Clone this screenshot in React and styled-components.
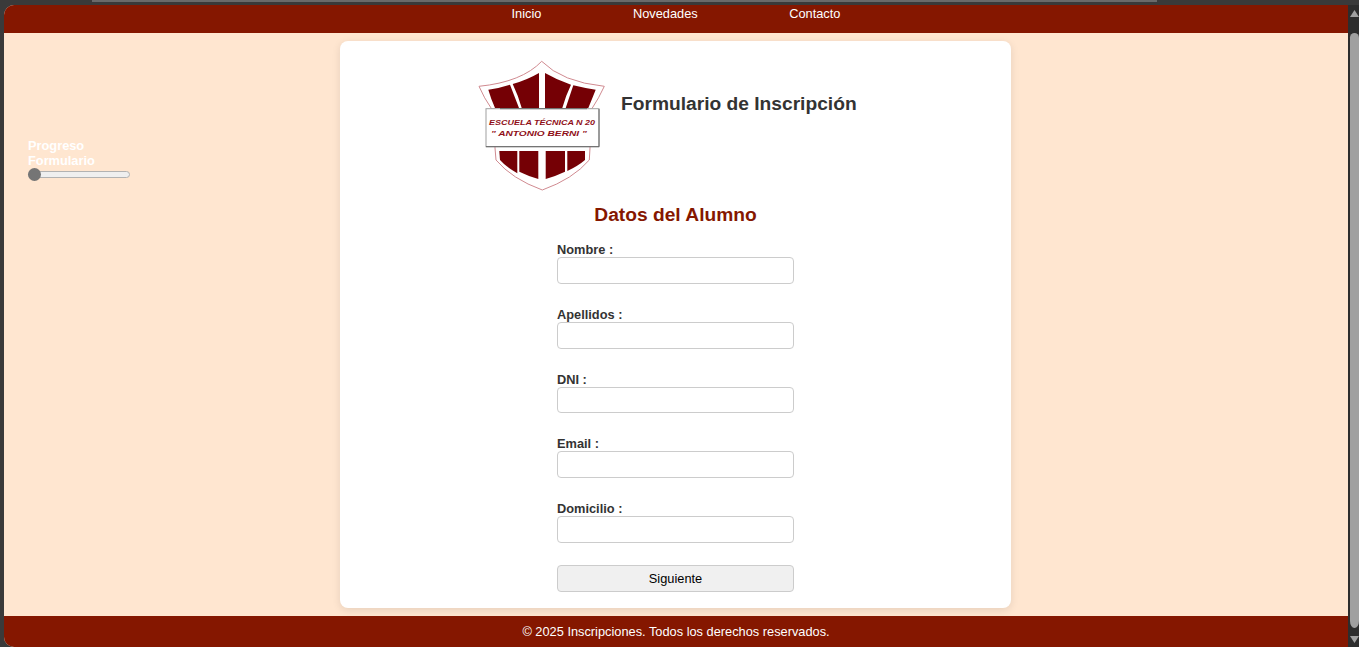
import React from 'react';
import styled, { createGlobalStyle } from 'styled-components';

const GlobalStyle = createGlobalStyle`
  html, body {
    margin: 0;
    height: 100%;
    overflow: hidden;
  }
  body {
    font-family: "Liberation Sans", Arial, sans-serif;
    background: #3a3a3a;
  }
`;

// window frame
const Frame = styled.div`
  display: flex;
  flex-direction: column;
  width: 1359px;
  height: 647px;
  background: #3a3a3a;
`;

const TopStrip = styled.div`
  flex: none;
  height: 2px;
  margin: 0 202px 3px 92px;
  background: #6a6a6a;
`;

const Viewport = styled.div`
  flex: 1;
  display: flex;
  min-height: 0;
  padding-left: 4px;
`;

const Page = styled.div`
  flex: 1;
  display: flex;
  flex-direction: column;
  min-width: 0;
  background: #ffe6d0;
  border-radius: 10px 0 0 10px;
  overflow: hidden;
`;

// scrollbar
const Scrollbar = styled.div`
  flex: none;
  display: flex;
  flex-direction: column;
  align-items: flex-end;
  width: 11px;
  padding-top: 5px;
  background: #2d2d2d;
`;

const Arrow = styled.div`
  flex: none;
  width: 9px;
  height: 7px;
  background: #a0a0a0;
  clip-path: ${(p) => (p.$down ? 'polygon(0 0, 100% 0, 50% 100%)' : 'polygon(50% 0, 100% 100%, 0 100%)')};
`;

const Thumb = styled.div`
  flex: none;
  width: 9px;
  height: 595px;
  margin: 16px 0 8px;
  background: #a0a0a0;
  border-radius: 5px 5px 5px 5px / 5px 5px 8px 8px;
`;

// header
const Header = styled.header`
  flex: none;
  box-sizing: border-box;
  display: flex;
  justify-content: center;
  gap: 91.5px;
  height: 28px;
  padding-top: 1px;
  background: #851700;
`;

const NavLink = styled.a`
  color: #ffffff;
  font-size: 12.8px;
  line-height: 16px;
  text-decoration: none;
`;

// main
const Main = styled.main`
  flex: 1;
  display: grid;
  grid-template-columns: 336px 671px 1fr;
  min-height: 0;
  padding: 8px 0;
`;

const Sidebar = styled.aside`
  display: flex;
  flex-direction: column;
  align-items: flex-start;
  padding: 97px 0 0 24px;
`;

const ProgressLabel = styled.label`
  width: 90px;
  color: #ffffff;
  font-size: 12.8px;
  font-weight: bold;
  line-height: 15px;
`;

const ProgressBar = styled.input`
  appearance: none;
  width: 102px;
  height: 13px;
  margin: 0;
  background: transparent;

  &::-webkit-slider-runnable-track {
    box-sizing: border-box;
    height: 7px;
    background: #efefef;
    border: 1px solid #b2b2b2;
    border-radius: 4px;
  }

  &::-webkit-slider-thumb {
    appearance: none;
    width: 13px;
    height: 13px;
    margin-top: -4px;
    background: #757575;
    border-radius: 50%;
    transform: translateX(-1px);
  }
`;

const Card = styled.section`
  display: flex;
  flex-direction: column;
  align-items: center;
  padding-top: 14px;
  background: #ffffff;
  border-radius: 8px;
  box-shadow: 0 2px 8px rgba(0, 0, 0, 0.1);
`;

const CardHead = styled.div`
  align-self: flex-start;
  display: flex;
  align-items: flex-start;
  gap: 6px;
  height: 142px;
  margin-left: 130px;
`;

const Logo = styled.svg`
  flex: none;
  width: 145px;
  height: 142px;
`;

const Title = styled.h1`
  margin: 37px 0 0;
  color: #333333;
  font-size: 19.2px;
  line-height: 24px;
  font-weight: bold;
`;

const Subtitle = styled.h2`
  margin: 6px 0 14px;
  color: #851700;
  font-size: 19.2px;
  line-height: 24px;
  font-weight: bold;
`;

const Form = styled.form`
  display: flex;
  flex-direction: column;
  width: 237px;
`;

const Field = styled.div`
  display: flex;
  flex-direction: column;
  margin-bottom: 22px;
`;

const FieldLabel = styled.label`
  height: 16px;
  color: #333333;
  font-size: 12.8px;
  font-weight: bold;
  line-height: 18px;
`;

const Input = styled.input`
  box-sizing: border-box;
  width: 100%;
  height: 26.75px;
  padding: 4px 8px;
  background: #ffffff;
  border: 1px solid #cccccc;
  border-radius: 4px;
`;

const Button = styled.button`
  box-sizing: border-box;
  width: 100%;
  height: 27px;
  padding: 0;
  color: #000000;
  font-family: inherit;
  font-size: 12.8px;
  background: #f0f0f0;
  border: 1px solid #cccccc;
  border-radius: 4px;
`;

// footer
const Footer = styled.footer`
  flex: none;
  height: 31px;
  color: #ffffff;
  font-size: 12.8px;
  line-height: 31px;
  text-align: center;
  background: #851700;
`;

const FIELDS = ['Nombre', 'Apellidos', 'DNI', 'Email', 'Domicilio'];

const PANELS = [
  'M18.3 34.7 Q30 33 40 29.7 L49 53 H25 Q21 44 18.3 34.7 Z',
  'M42.7 29 Q57 25 69 18 V53 H51.7 Q48 40 42.7 29 Z',
  'M75 18 Q87 25 101 29.7 Q96 40 92.3 53 H75 Z',
  'M103.3 30.3 Q114 33 125.7 34.7 Q122 44 118.3 53 H95.7 Z',
  'M29.3 96 H47.3 V118.3 Q36 112 30 105 Z',
  'M49.3 96 H68.3 V124 Q58 121 49.3 116.7 Z',
  'M75.7 96 H95 V116.7 Q86 121 75.7 124 Z',
  'M97.3 96 H115 V105 Q108 111 97.3 116 Z',
];

function SchoolLogo() {
  return (
    <Logo viewBox="0 0 145 142" aria-label="Escuela Técnica N 20">
      <path
        d="M71.7 6.3 Q92 27 134.3 31.3 Q129 43 121.7 54 H120 V93 L119.3 105 Q103 124 72.3 135 Q42 124 26 105 L25 93 V54 H21.7 Q14 43 9 31.3 Q52 27 71.7 6.3 Z"
        fill="#ffffff"
        stroke="#d08a90"
        strokeWidth="1"
      />
      {PANELS.map((d) => (
        <path key={d} d={d} fill="#750005" />
      ))}
      <rect x="16" y="53.7" width="113" height="38" fill="#ffffff" stroke="#a0a0a0" strokeWidth="1" />
      <path d="M30 53.7 H117 M129 54 V91.7 H16" fill="none" stroke="#666666" strokeWidth="1" />
      <text x="19" y="70" textLength="106" lengthAdjust="spacingAndGlyphs" fontFamily="'Liberation Sans', sans-serif" fontStyle="italic" fontWeight="bold" fontSize="6.3" fill="#8f0f18">
        ESCUELA TÉCNICA N 20
      </text>
      <text x="21" y="80.7" textLength="95.7" lengthAdjust="spacingAndGlyphs" fontFamily="'Liberation Sans', sans-serif" fontStyle="italic" fontWeight="bold" fontSize="7" fill="#8f0f18">
        " ANTONIO BERNI "
      </text>
    </Logo>
  );
}

export default function App() {
  return (
    <>
      <GlobalStyle />
      <Frame>
        <TopStrip />
        <Viewport>
          <Page>
            <Header>
              <NavLink href="#">Inicio</NavLink>
              <NavLink href="#">Novedades</NavLink>
              <NavLink href="#">Contacto</NavLink>
            </Header>
            <Main>
              <Sidebar>
                <ProgressLabel htmlFor="progreso">Progreso Formulario</ProgressLabel>
                <ProgressBar id="progreso" type="range" min="0" max="100" defaultValue="0" />
              </Sidebar>
              <Card>
                <CardHead>
                  <SchoolLogo />
                  <Title>Formulario de Inscripción</Title>
                </CardHead>
                <Subtitle>Datos del Alumno</Subtitle>
                <Form onSubmit={(e) => e.preventDefault()}>
                  {FIELDS.map((name) => (
                    <Field key={name}>
                      <FieldLabel htmlFor={name}>{name} :</FieldLabel>
                      <Input id={name} type="text" />
                    </Field>
                  ))}
                  <Button type="submit">Siguiente</Button>
                </Form>
              </Card>
              <div />
            </Main>
            <Footer>© 2025 Inscripciones. Todos los derechos reservados.</Footer>
          </Page>
          <Scrollbar>
            <Arrow />
            <Thumb />
            <Arrow $down />
          </Scrollbar>
        </Viewport>
      </Frame>
    </>
  );
}
